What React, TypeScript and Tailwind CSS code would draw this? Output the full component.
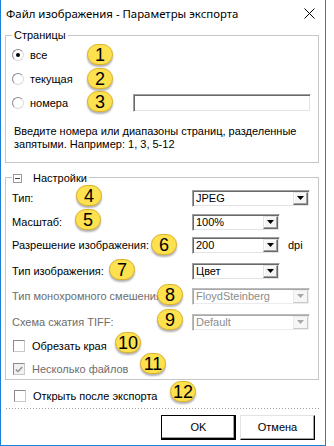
import clsx from "clsx";
import type { ReactNode } from "react";

type BadgeSpot = { n: number; x: number; y: number };

// numbered callouts drawn over the dialog, centre coordinates in px
const BADGES: BadgeSpot[] = [
  { n: 1, x: 100, y: 55 },
  { n: 2, x: 100, y: 79 },
  { n: 3, x: 100, y: 102 },
  { n: 4, x: 89, y: 196 },
  { n: 5, x: 88, y: 220 },
  { n: 6, x: 164, y: 245 },
  { n: 7, x: 122, y: 270 },
  { n: 8, x: 170, y: 295 },
  { n: 9, x: 170, y: 320 },
  { n: 10, x: 128, y: 343 },
  { n: 11, x: 153, y: 364 },
  { n: 12, x: 183, y: 392 },
];

function Badge({ n, x, y }: BadgeSpot) {
  return (
    <div
      className="absolute flex h-[21px] w-[26px] items-center justify-center rounded-full border border-[#dcb126] bg-[#fde14e] text-[18px] leading-none text-black shadow-[0_2px_2px_rgba(0,0,0,0.3)]"
      style={{ left: x - 13, top: y - 11 }}
    >
      {n}
    </div>
  );
}

function Radio({ checked }: { checked?: boolean }) {
  return (
    <span className="flex h-[12px] w-[12px] shrink-0 items-center justify-center rounded-full border border-t-[#8a8a8a] border-l-[#8a8a8a] border-r-[#dcdcdc] border-b-[#dcdcdc] bg-white">
      {checked && <span className="h-[4px] w-[4px] rounded-full bg-black" />}
    </span>
  );
}

function Check({ checked, disabled }: { checked?: boolean; disabled?: boolean }) {
  return (
    <span
      className={clsx(
        "flex h-[12px] w-[12px] shrink-0 items-center justify-center border border-t-[#8a8a8a] border-l-[#8a8a8a] border-r-[#c8c8c8] border-b-[#c8c8c8]",
        disabled ? "bg-[#f0f0f0]" : "bg-white"
      )}
    >
      {checked && (
        <svg width="8" height="7" viewBox="0 0 8 7">
          <path d="M0.8 3.4 L3 5.6 L7.2 1" fill="none" stroke={disabled ? "#8d8d8d" : "#000"} strokeWidth="1.4" />
        </svg>
      )}
    </span>
  );
}

function Combo({ value, width, disabled }: { value: string; width: string; disabled?: boolean }) {
  return (
    <div
      className={clsx(
        "flex h-[17px] shrink-0 border bg-white p-[1px]",
        width,
        disabled
          ? "border-t-[#bdbdbd] border-l-[#bdbdbd] border-r-white border-b-white shadow-[inset_1px_1px_0_#a8a8a8,inset_-1px_-1px_0_#ececec]"
          : "border-t-[#a0a0a0] border-l-[#a0a0a0] border-r-white border-b-white shadow-[inset_1px_1px_0_#696969,inset_-1px_-1px_0_#e3e3e3]"
      )}
    >
      <span className={clsx("flex-1 truncate pl-[2px] leading-[13px]", disabled ? "text-[#8d8d8d]" : "text-black")}>
        {value}
      </span>
      <span
        className={clsx(
          "flex w-[15px] shrink-0 items-center justify-center border",
          disabled
            ? "border-t-[#ececec] border-l-[#ececec] border-r-[#c8c8c8] border-b-[#c8c8c8] bg-[#f6f6f6]"
            : "border-t-[#e3e3e3] border-l-[#e3e3e3] border-r-[#696969] border-b-[#696969] bg-[#f4f4f4] shadow-[inset_-1px_-1px_0_#a0a0a0,inset_1px_1px_0_#fff]"
        )}
      >
        <svg width="7" height="4" viewBox="0 0 7 4">
          <path d="M0 0h7L3.5 4z" fill={disabled ? "#a8a8a8" : "#000"} />
        </svg>
      </span>
    </div>
  );
}

function Row({
  mt,
  label,
  disabled,
  children,
}: {
  mt: string;
  label: string;
  disabled?: boolean;
  children: ReactNode;
}) {
  return (
    <div className={clsx("flex h-[18px] items-center", mt)}>
      <span
        className={clsx(
          "w-[180px] shrink-0 overflow-hidden whitespace-nowrap",
          disabled ? "text-[#6d6d6d]" : "text-black"
        )}
      >
        {label}
      </span>
      {children}
    </div>
  );
}

export default function App() {
  return (
    <div className="relative h-[446px] w-[334px] bg-white font-['Liberation_Sans',Arial,sans-serif] text-[11px] text-black">
      <div className="flex h-[446px] w-[326px] flex-col border-x border-b border-[#1a82d6]">
        {/* Title bar */}
        <div className="flex h-[29px] shrink-0 items-center justify-between pb-[2px] pl-[5px] pr-[10px]">
          <span className="font-['Noto_Sans',sans-serif] text-[11.4px] text-black">
            Файл изображения - Параметры экспорта
          </span>
          <svg width="11" height="11" viewBox="0 0 11 11">
            <path d="M0.5 0.5 L10.5 10.5 M10.5 0.5 L0.5 10.5" stroke="#000" strokeWidth="1" />
          </svg>
        </div>

        {/* Pages group */}
        <fieldset className="ml-[4px] w-[314px] border border-[#c6c6c6] px-[6px] pb-[11px]">
          <legend className="px-[2px] leading-[13px]">Страницы</legend>
          <div className="mt-[1px] flex h-[24px] items-center gap-[6px]">
            <Radio checked />
            <span>все</span>
          </div>
          <div className="flex h-[24px] items-center gap-[6px]">
            <Radio />
            <span>текущая</span>
          </div>
          <div className="flex h-[24px] items-center">
            <div className="flex w-[121px] items-center gap-[6px]">
              <Radio />
              <span>номера</span>
            </div>
            <div className="h-[18px] w-[178px] border border-t-[#a0a0a0] border-l-[#a0a0a0] border-r-white border-b-white bg-white shadow-[inset_1px_1px_0_#696969,inset_-1px_-1px_0_#e3e3e3]" />
          </div>
          <p className="ml-[2px] mt-[10px] leading-[13px]">
            Введите номера или диапазоны страниц, разделенные
            <br />
            запятыми. Например: 1, 3, 5-12
          </p>
        </fieldset>

        {/* Settings group */}
        <fieldset className="ml-[4px] mt-[6px] w-[314px] border border-[#c6c6c6] px-[6px] pb-[1px]">
          <legend className="pl-[1px] pr-[2px] leading-[13px]">
            <span className="inline-flex items-center">
              <span className="flex h-[9px] w-[9px] items-center justify-center border border-[#9a9a9a]">
                <span className="h-px w-[5px] bg-[#444]" />
              </span>
              <span className="ml-[11px]">Настройки</span>
            </span>
          </legend>

          <Row mt="mt-[4px]" label="Тип:">
            <Combo value="JPEG" width="w-[118px]" />
          </Row>
          <Row mt="mt-[6px]" label="Масштаб:">
            <Combo value="100%" width="w-[88px]" />
          </Row>
          <Row mt="mt-[5px]" label="Разрешение изображения:">
            <Combo value="200" width="w-[88px]" />
            <span className="ml-[8px]">dpi</span>
          </Row>
          <Row mt="mt-[8px]" label="Тип изображения:">
            <Combo value="Цвет" width="w-[88px]" />
          </Row>
          <Row mt="mt-[7px]" label="Тип монохромного смешения:" disabled>
            <Combo value="FloydSteinberg" width="w-[118px]" disabled />
          </Row>
          <Row mt="mt-[8px]" label="Схема сжатия TIFF:" disabled>
            <Combo value="Default" width="w-[118px]" disabled />
          </Row>

          <div className="mt-[6px] flex h-[18px] items-center gap-[7px] pl-[1px]">
            <Check />
            <span>Обрезать края</span>
          </div>
          <div className="mt-[5px] flex h-[18px] items-center gap-[7px] pl-[1px]">
            <Check checked disabled />
            <span className="text-[#6d6d6d]">Несколько файлов</span>
          </div>
        </fieldset>

        <div className="ml-[13px] mt-[7px] flex h-[18px] items-center gap-[7px]">
          <Check />
          <span>Открыть после экспорта</span>
        </div>

        <div className="mx-[5px] mt-[3px] h-px bg-[repeating-linear-gradient(90deg,#a0a0a0_0_1px,transparent_1px_3px)]" />

        {/* Dialog buttons */}
        <div className="mt-[6px] flex justify-end gap-[4px] pr-[10px]">
          <button className="flex h-[25px] w-[75px] items-center justify-center border border-black bg-white shadow-[inset_-1px_-1px_0_#000,inset_-2px_-2px_0_#a0a0a0,inset_1px_1px_0_#fff]">
            OK
          </button>
          <button className="flex h-[25px] w-[75px] items-center justify-center border border-t-[#e3e3e3] border-l-[#e3e3e3] border-r-black border-b-black bg-white shadow-[inset_-1px_-1px_0_#a0a0a0]">
            Отмена
          </button>
        </div>
      </div>

      {BADGES.map((b) => (
        <Badge key={b.n} {...b} />
      ))}
    </div>
  );
}
